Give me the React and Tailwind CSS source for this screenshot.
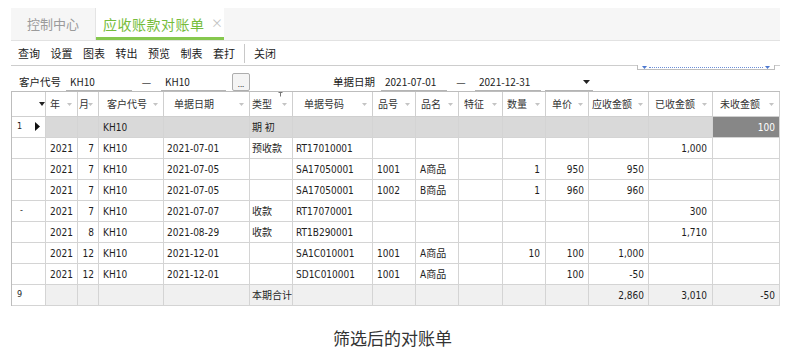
import React from "react";

const cols = [
  { key: "ind", w: "w-[34px]" },
  { key: "yr", w: "w-[32px]", h: "年", hp: "pl-[4px]", dc: "pl-[4px] justify-start" },
  { key: "mo", w: "w-[21px]", h: "月", hp: "pl-[1px]", dc: "pr-[4px] justify-end" },
  { key: "cust", w: "w-[65px]", h: "客户代号", hp: "pl-[8px]", dc: "pl-[4px] justify-start" },
  { key: "date", w: "w-[86px]", h: "单据日期", hp: "pl-[10px]", dc: "pl-[3px] justify-start" },
  { key: "type", w: "w-[43px]", h: "类型", hp: "pl-[2px]", dc: "pl-[2px] justify-start", mark: true },
  { key: "no", w: "w-[80px]", h: "单据号码", hp: "pl-[11px]", dc: "pl-[3px] justify-start" },
  { key: "pn", w: "w-[43px]", h: "品号", hp: "pl-[5px]", dc: "pl-[4px] justify-start" },
  { key: "name", w: "w-[43px]", h: "品名", hp: "pl-[5px]", dc: "pl-[4px] justify-start" },
  { key: "feat", w: "w-[44px]", h: "特征", hp: "pl-[5px]", dc: "pl-[4px] justify-start" },
  { key: "qty", w: "w-[43px]", h: "数量", hp: "pl-[4px]", dc: "pr-[5px] justify-end" },
  { key: "price", w: "w-[43px]", h: "单价", hp: "pl-[6px]", dc: "pr-[4px] justify-end" },
  { key: "amt", w: "w-[60px]", h: "应收金额", hp: "pl-[3px]", dc: "pr-[4px] justify-end" },
  { key: "recv", w: "w-[64px]", h: "已收金额", hp: "pl-[6px]", dc: "pr-[5px] justify-end" },
  { key: "open", w: "w-[67px]", h: "未收金额", hp: "pl-[7px]", dc: "pr-[4px] justify-end" },
];

const rows = [
  { ind: "1", arrow: true, kind: "open", cust: "KH10", type: "期 初", open: "100" },
  { yr: "2021", mo: "7", cust: "KH10", date: "2021-07-01", type: "预收款", no: "RT17010001", recv: "1,000" },
  { yr: "2021", mo: "7", cust: "KH10", date: "2021-07-05", no: "SA17050001", pn: "1001", name: "A商品", qty: "1", price: "950", amt: "950" },
  { yr: "2021", mo: "7", cust: "KH10", date: "2021-07-05", no: "SA17050001", pn: "1002", name: "B商品", qty: "1", price: "960", amt: "960" },
  { ind: "-", yr: "2021", mo: "7", cust: "KH10", date: "2021-07-07", type: "收款", no: "RT17070001", recv: "300" },
  { yr: "2021", mo: "8", cust: "KH10", date: "2021-08-29", type: "收款", no: "RT1B290001", recv: "1,710" },
  { yr: "2021", mo: "12", cust: "KH10", date: "2021-12-01", no: "SA1C010001", pn: "1001", name: "A商品", qty: "10", price: "100", amt: "1,000" },
  { yr: "2021", mo: "12", cust: "KH10", date: "2021-12-01", no: "SD1C010001", pn: "1001", name: "A商品", price: "100", amt: "-50" },
  { ind: "9", kind: "total", type: "本期合计", amt: "2,860", recv: "3,010", open: "-50" },
];

function HeadArrow() {
  return (
    <svg width="5" height="3" viewBox="0 0 5 3" className="absolute right-[5px] top-[11px]">
      <path d="M0 0 H5 L2.5 3 Z" fill="#c4c4c4" />
    </svg>
  );
}

function Header() {
  return (
    <div className="flex h-[25px] font-['Noto_Sans_CJK_SC',sans-serif] text-[10px] text-[#333]">
      {cols.map((c) =>
        c.key === "ind" ? (
          <div key={c.key} className={`${c.w} shrink-0 relative border-r border-b border-[#cfcfcf]`}>
            <svg width="6" height="4" viewBox="0 0 6 4" className="absolute left-[27px] top-[10px]">
              <path d="M0 0 H6 L3 4 Z" fill="#222" />
            </svg>
          </div>
        ) : (
          <div key={c.key} className={`${c.w} shrink-0 relative flex items-center border-r border-b border-[#cfcfcf] ${c.hp}`}>
            <span className="leading-none">{c.h}</span>
            {c.mark && (
              <svg width="5" height="5" viewBox="0 0 5 5" className="absolute left-[28px] top-[0px]">
                <path d="M0.5 0.5 H4.5 M2.5 0.5 V4.5" stroke="#777" strokeWidth="1" />
              </svg>
            )}
            <HeadArrow />
          </div>
        )
      )}
    </div>
  );
}

function Row({ r }) {
  const isOpen = r.kind === "open";
  const isTotal = r.kind === "total";
  return (
    <div className="flex h-[21px] font-['DejaVu_Sans_Condensed','DejaVu_Sans','Noto_Sans_CJK_SC',sans-serif] [font-stretch:condensed] text-[10px] text-[#1e1e1e]">
      {cols.map((c) => {
        if (c.key === "ind") {
          return (
            <div key={c.key} className={`${c.w} shrink-0 relative flex items-center bg-white border-r border-b border-[#d4d4d4] text-[9px]`}>
              <span className={r.ind === "-" ? "pl-[8px]" : "pl-[5px]"}>{r.ind || ""}</span>
              {r.arrow && (
                <svg width="5" height="9" viewBox="0 0 5 9" className="absolute left-[23px] top-[5px]">
                  <path d="M0 0 L5 4.5 L0 9 Z" fill="#111" />
                </svg>
              )}
            </div>
          );
        }
        let bg = "bg-white";
        let tc = "";
        if (isOpen) bg = c.key === "open" ? "bg-[#878787]" : "bg-[#d9d9d9]";
        if (isOpen && c.key === "open") tc = "text-white";
        if (isTotal) bg = "bg-[#f0f0f0]";
        return (
          <div key={c.key} className={`${c.w} shrink-0 flex items-center border-r border-b border-[#d4d4d4] whitespace-nowrap overflow-hidden ${bg} ${tc} ${c.dc}`}>
            {r[c.key] || ""}
          </div>
        );
      })}
    </div>
  );
}

function Input({ w, v }) {
  return (
    <div className={`${w} h-[19px] flex items-center border-b border-[#b4b4b4] pl-[4px] text-[10px] text-[#222] font-['Noto_Sans_CJK_SC',sans-serif]`}>
      {v}
    </div>
  );
}

export default function App() {
  const tools = ["查询", "设置", "图表", "转出", "预览", "制表", "套打"];
  return (
    <div className="w-[797px] h-[358px] bg-white relative overflow-hidden font-['Noto_Sans_CJK_SC',sans-serif]">
      <div className="pl-[11px] pt-[8px]">
        <div className="w-[769px]">
          {/* Tabs */}
          <div className="flex h-[33px] bg-[#f6f6f6] border-b border-[#e2e2e2]">
            <div className="w-[85px] flex items-center justify-center text-[13px] text-[#9b9b9b] border-r border-[#e4e4e4]">
              控制中心
            </div>
            <div className="w-[128px] relative bg-white flex items-center pl-[7px] text-[14px] text-[#76bd3c]">
              <span className="tracking-[0.5px]">应收账款对账单</span>
              <span className="absolute left-[115px] top-[6px] text-[12px] text-[#c2c2c2]">×</span>
              <div className="absolute left-0 right-0 bottom-0 h-[3px] bg-[#86c84e]" />
            </div>
          </div>
          {/* Toolbar */}
          <div className="flex items-center h-[25px] border-b border-[#cdcdcd] pl-[7px] text-[11px] text-[#222]">
            <div className="flex items-center gap-[10.5px]">
              {tools.map((t) => (
                <span key={t}>{t}</span>
              ))}
            </div>
            <div className="ml-[9px] w-px h-[19px] bg-[#c8c8c8]" />
            <span className="ml-[9px]">关闭</span>
          </div>
          {/* Filter */}
          <div className="flex items-end h-[25px] pl-[8px] text-[10.5px] text-[#222] relative">
            <div className="w-[47px] h-[19px] flex items-center">客户代号</div>
            <Input w="w-[66px]" v="KH10" />
            <div className="w-[29px] h-[19px] flex items-center justify-center text-[#444]">—</div>
            <Input w="w-[65px]" v="KH10" />
            <div className="ml-[6px] w-[18px] h-[18px] border border-[#adadad] rounded-[2px] bg-[#f4f4f4] flex items-end justify-center text-[8px] leading-[12px] text-[#333]">
              ...
            </div>
            <div className="ml-[83px] w-[48px] h-[19px] flex items-center">单据日期</div>
            <Input w="w-[66px]" v="2021-07-01" />
            <div className="w-[28px] h-[19px] flex items-center justify-center text-[#444]">—</div>
            <Input w="w-[66px]" v="2021-12-31" />
            <div className="ml-[4px] w-[48px] h-[19px] relative border-b border-[#b4b4b4]">
              <svg width="7" height="4" viewBox="0 0 7 4" className="absolute left-[38px] top-[8px]">
                <path d="M0 0 H7 L3.5 4 Z" fill="#222" />
              </svg>
            </div>
            {/* collapsed panel handle */}
            <div className="absolute left-[626px] top-[-1px] w-[138px] h-[5px] bg-white border border-t-0 border-[#bdbdbd] flex items-center px-[4px] gap-[2px]">
              <svg width="5" height="3" viewBox="0 0 5 3"><path d="M0 0 H5 L2.5 3 Z" fill="#4d78d0" /></svg>
              <div className="flex-1 border-t border-dotted border-[#6d8fd8]" />
              <svg width="5" height="3" viewBox="0 0 5 3"><path d="M0 0 H5 L2.5 3 Z" fill="#4d78d0" /></svg>
            </div>
          </div>
          {/* Grid */}
          <div className="border-t border-l border-[#bdbdbd] w-[769px]">
            <Header />
            {rows.map((r, i) => (
              <Row key={i} r={r} />
            ))}
          </div>
        </div>
      </div>
      <div className="mt-[20px] w-[785px] text-center text-[17px] leading-[24px] text-[#333]">
        筛选后的对账单
      </div>
    </div>
  );
}
